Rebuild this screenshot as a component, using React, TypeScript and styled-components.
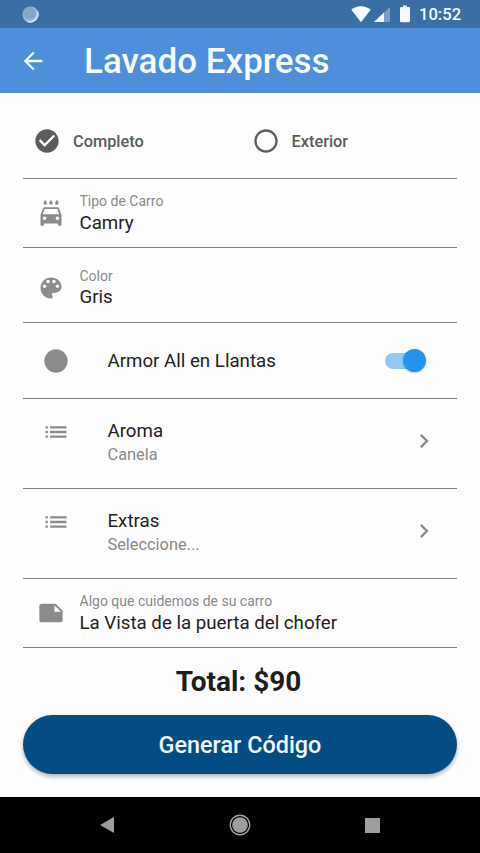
import React from "react";
import styled, { createGlobalStyle } from "styled-components";
import {
  MdArrowBack,
  MdCheckCircle,
  MdChevronRight,
  MdLens,
  MdList,
  MdNote,
  MdRadioButtonUnchecked,
} from "react-icons/md";

const GlobalStyle = createGlobalStyle`
  * { box-sizing: border-box; }
  body { margin: 0; background: #fff; font-family: Roboto, "Liberation Sans", sans-serif; }
`;

const Screen = styled.div`
  width: 480px;
  height: 853px;
  display: flex;
  flex-direction: column;
  background: #fefefe;
  overflow: hidden;
`;

const StatusBar = styled.div`
  height: 28px;
  flex: none;
  display: flex;
  align-items: center;
  padding: 0 18px 0 22px;
  background: #3b6ea5;
  color: #f4faff;
`;

const StatusIcons = styled.div`
  display: flex;
  align-items: center;
  margin-left: auto;
`;

const Clock = styled.span`
  width: 43px;
  margin-left: 8px;
  padding-top: 1px;
  font-size: 16.6px;
  font-weight: 500;
  line-height: 28px;
  white-space: nowrap;
`;

const AppBar = styled.header`
  height: 65px;
  flex: none;
  display: flex;
  align-items: center;
  padding-left: 19px;
  background: #4d8fdb;
  color: #f6fcff;
`;

const Title = styled.h1`
  margin: 3px 0 0 37px;
  font-size: 35px;
  font-weight: 500;
  line-height: 62px;
  white-space: nowrap;
`;

const Form = styled.main`
  height: 704px;
  flex: none;
  padding: 0 23px;
  display: flex;
  flex-direction: column;
`;

const Row = styled.div<{ $height: number; $indent?: number; $top?: number }>`
  height: ${(p) => p.$height}px;
  flex: none;
  display: flex;
  align-items: flex-start;
  padding-left: ${(p) => p.$indent ?? 14}px;
  padding-top: ${(p) => p.$top ?? 0}px;
  border-bottom: 1px solid #7d7d7d;
`;

const Option = styled.div`
  width: 218.5px;
  flex: none;
  display: flex;
  align-items: center;
  gap: 12px;
  color: #5c5c5c;
  font-size: 16.35px;
  font-weight: 500;
`;

const IconSlot = styled.span<{ $top?: number }>`
  width: 28px;
  height: 28px;
  flex: none;
  display: flex;
  margin-top: ${(p) => p.$top ?? 0}px;
  color: #8b8b8b;
`;

const Field = styled.div`
  margin-left: 14.5px;
  display: flex;
  flex-direction: column;
`;

const FieldLabel = styled.span`
  font-size: 14px;
  line-height: 18px;
  color: #8a8a8a;
  white-space: nowrap;
`;

const FieldValue = styled.span`
  margin-top: 0.5px;
  font-size: 18.7px;
  line-height: 24px;
  color: #222;
  white-space: nowrap;
`;

const Tile = styled.div<{ $top?: number }>`
  margin-left: 37.5px;
  padding-top: ${(p) => p.$top ?? 0}px;
  flex: 1;
  display: flex;
  flex-direction: column;
`;

const TileTitle = styled.span`
  font-size: 18.7px;
  line-height: 24px;
  color: #222;
`;

const TileSubtitle = styled.span`
  font-size: 16.35px;
  line-height: 24px;
  color: #8a8a8a;
`;

const Trailing = styled.div`
  padding: 8px 19px 0 0;
  display: flex;
`;

const Track = styled.div`
  width: 38px;
  height: 16.5px;
  margin: 10.5px 34px 0 0;
  border-radius: 9px;
  background: #90c8f6;
  display: flex;
  align-items: center;
  justify-content: flex-end;
`;

const Thumb = styled.div`
  width: 23.4px;
  height: 23.4px;
  flex: none;
  margin-right: -3px;
  border-radius: 50%;
  background: #2294ef;
  box-shadow: 0 1px 2px rgba(0, 60, 120, 0.25);
`;

const Total = styled.div`
  height: 67px;
  flex: none;
  padding-right: 3px;
  text-align: center;
  font-size: 28px;
  font-weight: 700;
  line-height: 67px;
  color: #1d1d1d;
`;

const SubmitButton = styled.button`
  height: 58.5px;
  flex: none;
  padding: 3px 0 0;
  border: 0;
  border-radius: 30px;
  background: #034c84;
  color: #f3fbff;
  font-family: inherit;
  font-size: 23.4px;
  font-weight: 500;
  line-height: 55px;
  box-shadow: 0 3px 4px rgba(0, 30, 60, 0.25), 0 1px 5px rgba(0, 0, 0, 0.1);
`;

const NavBar = styled.nav`
  height: 56px;
  flex: none;
  display: flex;
  align-items: center;
  justify-content: space-between;
  padding: 0 100px 0 99px;
  background: #000;
`;

const CarWashIcon = () => (
  <svg width="28" height="28" viewBox="0 0 24 24" fill="currentColor">
    <path d="M17 5c.83 0 1.5-.67 1.5-1.5 0-1-1.5-2.7-1.5-2.7s-1.5 1.7-1.5 2.7c0 .83.67 1.5 1.5 1.5zm-5 0c.83 0 1.5-.67 1.5-1.5 0-1-1.5-2.7-1.5-2.7s-1.5 1.7-1.5 2.7c0 .83.67 1.5 1.5 1.5zM7 5c.83 0 1.5-.67 1.5-1.5C8.5 2.5 7 .8 7 .8S5.5 2.5 5.5 3.5C5.5 4.33 6.17 5 7 5zm11.92 3.01C18.72 7.42 18.16 7 17.5 7h-11c-.66 0-1.21.42-1.42 1.01L3 14v8c0 .55.45 1 1 1h1c.55 0 1-.45 1-1v-1h12v1c0 .55.45 1 1 1h1c.55 0 1-.45 1-1v-8l-2.08-5.99zM6.5 18c-.83 0-1.5-.67-1.5-1.5S5.67 15 6.5 15s1.5.67 1.5 1.5S7.33 18 6.5 18zm11 0c-.83 0-1.5-.67-1.5-1.5s.67-1.5 1.5-1.5 1.5.67 1.5 1.5-.67 1.5-1.5 1.5zM5 13l1.5-4.5h11L19 13H5z" />
  </svg>
);

const PaletteIcon = () => (
  <svg width="28" height="28" viewBox="0 0 24 24" fill="currentColor">
    <path d="M12 3c-4.97 0-9 4.03-9 9s4.03 9 9 9c.83 0 1.5-.67 1.5-1.5 0-.39-.15-.74-.39-1.01-.23-.26-.38-.61-.38-.99 0-.83.67-1.5 1.5-1.5H16c2.76 0 5-2.24 5-5 0-4.42-4.03-8-9-8zm-5.5 9c-.83 0-1.5-.67-1.5-1.5S5.67 9 6.5 9 8 9.67 8 10.5 7.33 12 6.5 12zm3-4C8.67 8 8 7.33 8 6.5S8.67 5 9.5 5s1.5.67 1.5 1.5S10.33 8 9.5 8zm5 0c-.83 0-1.5-.67-1.5-1.5S13.67 5 14.5 5s1.5.67 1.5 1.5S15.33 8 14.5 8zm3 4c-.83 0-1.5-.67-1.5-1.5S16.67 9 17.5 9s1.5.67 1.5 1.5-.67 1.5-1.5 1.5z" />
  </svg>
);

type FieldRowProps = {
  height: number;
  top: number;
  icon: React.ReactNode;
  iconTop: number;
  label: string;
  value: string;
};

const FieldRow = ({ height, top, icon, iconTop, label, value }: FieldRowProps) => (
  <Row $height={height} $top={top}>
    <IconSlot $top={iconTop}>{icon}</IconSlot>
    <Field>
      <FieldLabel>{label}</FieldLabel>
      <FieldValue>{value}</FieldValue>
    </Field>
  </Row>
);

const PickerRow = ({ title, subtitle }: { title: string; subtitle: string }) => (
  <Row $height={90} $indent={19} $top={19}>
    <IconSlot>
      <MdList size={28} />
    </IconSlot>
    <Tile $top={1}>
      <TileTitle>{title}</TileTitle>
      <TileSubtitle>{subtitle}</TileSubtitle>
    </Tile>
    <Trailing>
      <IconSlot $top={1}>
        <MdChevronRight size={28} />
      </IconSlot>
    </Trailing>
  </Row>
);

export default function App() {
  return (
    <>
      <GlobalStyle />
      <Screen>
        <StatusBar>
          <svg width="17" height="17" viewBox="0 0 17 17">
            <circle cx="8.5" cy="8.5" r="8" fill="#9db9d4" />
            <path d="M15.6 5.2A8 8 0 0 1 5.2 15.6 8.6 8.6 0 0 0 15.6 5.2z" fill="#e3effa" stroke="#e3effa" strokeWidth="0.8" />
            <circle cx="7.6" cy="7.3" r="6.3" fill="#87a7c5" />
          </svg>
          <StatusIcons>
            <svg width="60" height="20" viewBox="0 0 60 20" fill="currentColor">
              <path d="M0.3 5.8C5.6 1 14.4 1 19.7 5.8L10 18.3z" />
              <path d="M39 3v15H23z" opacity="0.35" />
              <path d="M33 8.6v9.4H23z" />
              <path d="M52 1.5h4v1.6h1.8q1.2 0 1.2 1.2v12.7q0 1.2-1.2 1.2h-7.6q-1.2 0-1.2-1.2V4.3q0-1.2 1.2-1.2H52z" />
            </svg>
            <Clock>10:52</Clock>
          </StatusIcons>
        </StatusBar>

        <AppBar>
          <MdArrowBack size={28} />
          <Title>Lavado Express</Title>
        </AppBar>

        <Form>
          <Row $height={86} $indent={10} $top={34}>
            <Option>
              <MdCheckCircle size={28} />
              Completo
            </Option>
            <Option>
              <MdRadioButtonUnchecked size={28} />
              Exterior
            </Option>
          </Row>
          <FieldRow height={69} top={13} iconTop={7} icon={<CarWashIcon />} label="Tipo de Carro" value="Camry" />
          <FieldRow height={75} top={18.5} iconTop={7} icon={<PaletteIcon />} label="Color" value="Gris" />
          <Row $height={76} $indent={19} $top={19}>
            <IconSlot $top={5}>
              <MdLens size={28} />
            </IconSlot>
            <Tile $top={7}>
              <TileTitle>Armor All en Llantas</TileTitle>
            </Tile>
            <Track>
              <Thumb />
            </Track>
          </Row>
          <PickerRow title="Aroma" subtitle="Canela" />
          <PickerRow title="Extras" subtitle="Seleccione..." />
          <FieldRow
            height={69}
            top={13}
            iconTop={7}
            icon={<MdNote size={28} />}
            label="Algo que cuidemos de su carro"
            value="La Vista de la puerta del chofer"
          />
          <Total>Total: $90</Total>
          <SubmitButton>Generar Código</SubmitButton>
        </Form>

        <NavBar>
          <svg width="16" height="18" viewBox="0 0 16 18">
            <path d="M1 9L15 1v16z" fill="#9d9d9d" />
          </svg>
          <svg width="22" height="22" viewBox="0 0 22 22">
            <circle cx="11" cy="11" r="9.8" fill="none" stroke="#a5a5a5" strokeWidth="1.4" />
            <circle cx="11" cy="11" r="7.8" fill="#9d9d9d" />
          </svg>
          <svg width="15" height="15" viewBox="0 0 15 15">
            <rect width="15" height="15" fill="#9d9d9d" />
          </svg>
        </NavBar>
      </Screen>
    </>
  );
}
